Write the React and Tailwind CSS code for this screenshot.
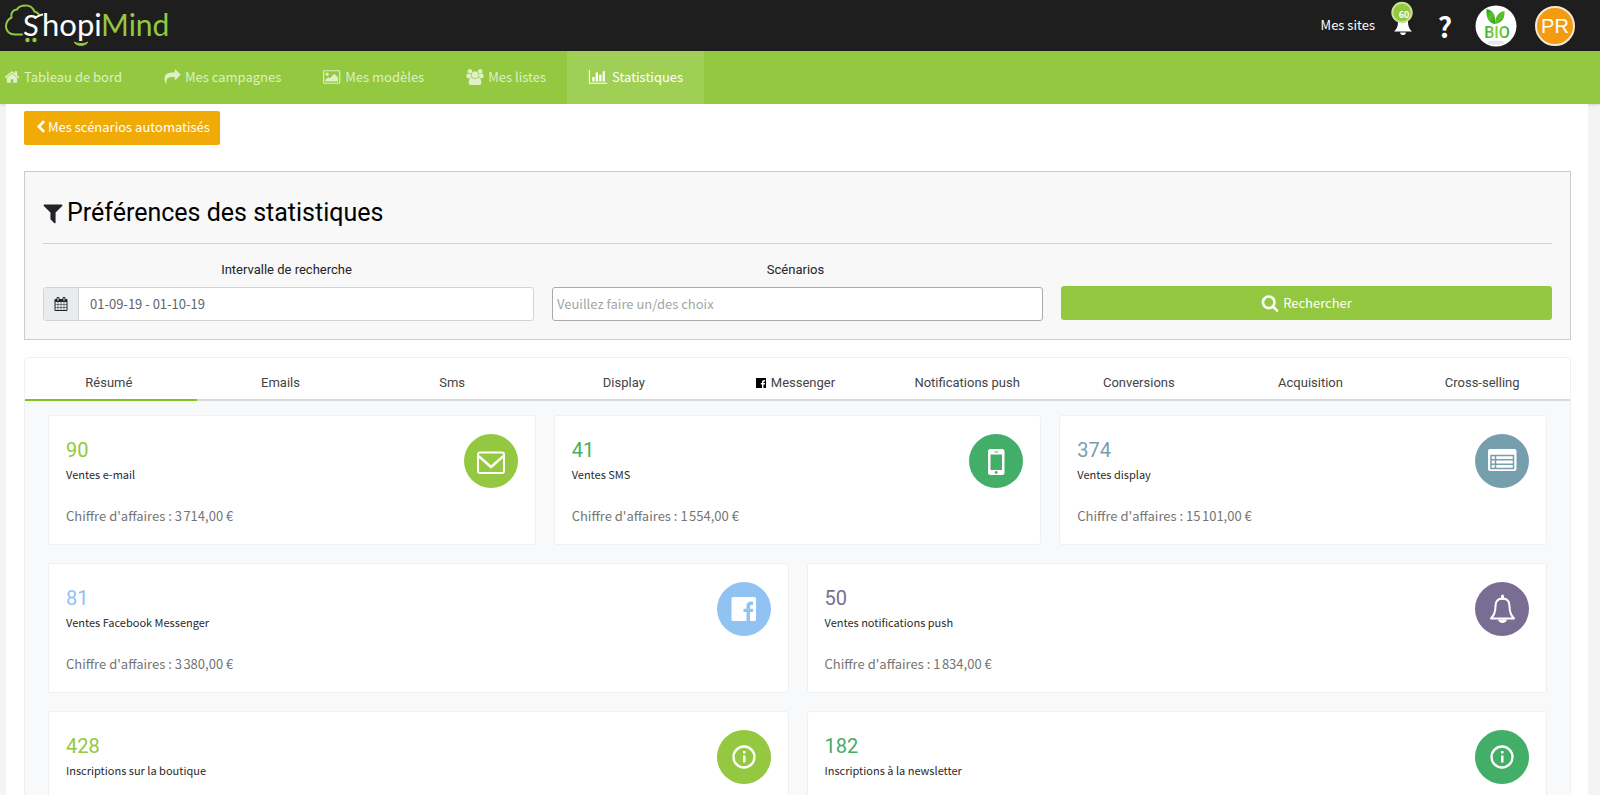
import React from "react";

const body = "font-['Noto_Sans_CJK_JP','Noto_Sans',sans-serif]";
const roboto = "font-[Roboto,'Noto_Sans',sans-serif]";

function Glyph({ d, x = 0, w = 1792, className }) {
  return (
    <svg viewBox={`${x} 0 ${w} 1792`} fill="currentColor" aria-hidden="true" className={className}>
      <path d={d} />
    </svg>
  );
}

const G = {
  home: "M1472 992v480q0 26-19 45t-45 19h-384v-384h-256v384h-384q-26 0-45-19t-19-45v-480q0-1 .5-3t.5-3l575-474 575 474q1 2 1 6zm223-69l-62 74q-8 9-21 11h-3q-13 0-21-7l-692-577-692 577q-12 8-24 7-13-2-21-11l-62-74q-8-10-7-23.5t11-21.5l719-599q32-26 76-26t76 26l244 204v-195q0-14 9-23t23-9h192q14 0 23 9t9 23v408l219 182q10 8 11 21.5t-7 23.5z",
  share: "M1792 640q0 26-19 45l-512 512q-19 19-45 19t-45-19-19-45v-256h-224q-98 0-175.5 6t-154 21.5-133 42.5-105.5 69.5-80 101-48.5 138.5-17.5 181q0 55 5 123 0 6 2.5 23.5t2.5 26.5q0 15-8.5 25t-23.5 10q-16 0-28-17-7-9-13-22t-13.5-30-10.5-24q-127-285-127-451 0-199 53-333 162-403 875-403h224v-256q0-26 19-45t45-19 45 19l512 512q19 19 19 45z",
  image: "M576 576q0 80-56 136t-136 56-136-56-56-136 56-136 136-56 136 56 56 136zm1024 384v448h-1408v-192l320-320 160 160 512-512zm96-704h-1600q-13 0-22.5 9.5t-9.5 22.5v1216q0 13 9.5 22.5t22.5 9.5h1600q13 0 22.5-9.5t9.5-22.5v-1216q0-13-9.5-22.5t-22.5-9.5zm160 32v1216q0 66-47 113t-113 47h-1600q-66 0-113-47t-47-113v-1216q0-66 47-113t113-47h1600q66 0 113 47t47 113z",
  users: "M593 896q-162 5-265 128h-134q-82 0-138-40.5t-56-118.5q0-353 124-353 6 0 43.5 21t97.5 42.5 119 21.5q67 0 133-23-5 37-5 66 0 159 81 293zm1071 637q0 120-73 189.5t-194 69.5h-874q-121 0-194-69.5t-73-189.5q0-53 3.5-103.5t14-109 26.5-108.5 43-97.5 62-81 85.5-53.5 111.5-20q10 0 43 21.5t73 48 107 48 135 21.5 135-21.5 107-48 73-48 43-21.5q61 0 111.5 20t85.5 53.5 62 81 43 97.5 26.5 108.5 14 109 3.5 103.5zm-1024-1277q0 106-75 181t-181 75-181-75-75-181 75-181 181-75 181 75 75 181zm704 384q0 159-112.5 271.5t-271.5 112.5-271.5-112.5-112.5-271.5 112.5-271.5 271.5-112.5 271.5 112.5 112.5 271.5zm576 225q0 78-56 118.5t-138 40.5h-134q-103-123-265-128 81-134 81-293 0-29-5-66 66 23 133 23 59 0 119-21.5t97.5-42.5 43.5-21q124 0 124 353zm-128-609q0 106-75 181t-181 75-181-75-75-181 75-181 181-75 181 75 75 181z",
  chart: "M640 896v512h-256v-512h256zm384-512v1024h-256v-1024h256zm1024 1152v128h-2048v-1536h128v1408h1920zm-640-896v768h-256v-768h256zm384-384v1152h-256v-1152h256z",
  chevron: "M1427 301l-531 531 531 531q19 19 19 45t-19 45l-166 166q-19 19-45 19t-45-19l-742-742q-19-19-19-45t19-45l742-742q19-19 45-19t45 19l166 166q19 19 19 45t-19 45z",
  filter: "M1595 295q17 41-14 70l-493 493v742q0 42-39 59-13 5-25 5-27 0-45-19l-256-256q-19-19-19-45v-486l-493-493q-31-29-14-70 17-39 59-39h1280q42 0 59 39z",
  calendar: "M192 1664h288v-288h-288v288zm352 0h320v-288h-320v288zm-352-352h288v-320h-288v320zm352 0h320v-320h-320v320zm-352-384h288v-288h-288v288zm736 736h320v-288h-320v288zm-384-736h320v-288h-320v288zm768 736h288v-288h-288v288zm-384-352h320v-320h-320v320zm-352-864v-288q0-13-9.5-22.5t-22.5-9.5h-64q-13 0-22.5 9.5t-9.5 22.5v288q0 13 9.5 22.5t22.5 9.5h64q13 0 22.5-9.5t9.5-22.5zm736 864h288v-320h-288v320zm-384-384h320v-288h-320v288zm384 0h288v-288h-288v288zm32-480v-288q0-13-9.5-22.5t-22.5-9.5h-64q-13 0-22.5 9.5t-9.5 22.5v288q0 13 9.5 22.5t22.5 9.5h64q13 0 22.5-9.5t9.5-22.5zm384-64v1280q0 52-38 90t-90 38h-1408q-52 0-90-38t-38-90v-1280q0-52 38-90t90-38h128v-96q0-66 47-113t113-47h64q66 0 113 47t47 113v96h384v-96q0-66 47-113t113-47h64q66 0 113 47t47 113v96h128q52 0 90 38t38 90z",
  search: "M1216 832q0-185-131.5-316.5t-316.5-131.5-316.5 131.5-131.5 316.5 131.5 316.5 316.5 131.5 316.5-131.5 131.5-316.5zm512 832q0 52-38 90t-90 38q-54 0-90-38l-343-342q-179 124-399 124-143 0-273.5-55.5t-225-150-150-225-55.5-273.5 55.5-273.5 150-225 225-150 273.5-55.5 273.5 55.5 225 150 150 225 55.5 273.5q0 220-124 399l343 343q37 37 37 90z",
};

function Logo() {
  return (
    <svg viewBox="0 0 176 51" className="h-[51px] w-[176px]" role="img" aria-label="ShopiMind">
      <path
        d="M22 34.500H15C9.500 34.500 6 31 6 26.500C6 22 8.500 19 11.500 17.500C10.500 13 13 9.500 17 9.500C18.500 6.500 22 5.500 26 5.500C30 5.500 33 8 34.500 11.500C36.500 12 38 13 39 14.500"
        fill="none"
        stroke="#93c840"
        strokeWidth="2"
        strokeLinecap="round"
      />
      <path d="M34 17.500C38 17.500 39.500 14.500 43 14.500" fill="none" stroke="#fff" strokeWidth="2" />
      <circle cx="27.500" cy="40" r="2.200" fill="#93c840" />
      <circle cx="34.500" cy="40" r="2.200" fill="#93c840" />
      <path d="M74 42C76 46.500 86 46.500 88 42C84 44 78 44 74 42Z" fill="#93c840" stroke="#93c840" strokeWidth="1" />
      <text y="36" className="font-[Lato,sans-serif]">
        <tspan x="23" fill="#ffffff" fontSize="29">S</tspan>
        <tspan x="42" fill="#ffffff" fontSize="31">hopi</tspan>
        <tspan x="101" fill="#93c840" fontSize="30">Mind</tspan>
      </text>
    </svg>
  );
}

function AlertBell() {
  return (
    <svg viewBox="0 0 24 36" className="h-9 w-6" aria-hidden="true">
      <path d="M7 14H17V22C17 26 18 29 21 31.500H3C6 29 7 26 7 22Z" fill="#fff" />
      <path d="M9 32.500H15C14.500 34.500 13.500 35 12 35C10.500 35 9.500 34.500 9 32.500Z" fill="#fff" />
      <circle cx="11" cy="12.500" r="9.700" fill="#93c840" stroke="#c6e39a" strokeWidth="2" />
      <text x="13" y="18" textAnchor="middle" fontSize="9" fill="#fff" fontWeight="700" className="font-['Noto_Sans_CJK_JP',sans-serif]">
        60
      </text>
    </svg>
  );
}

function BioAvatar() {
  return (
    <svg viewBox="0 0 42 42" className="size-[42px]" role="img" aria-label="BIO">
      <defs>
        <linearGradient id="leaf" x1="0" y1="0" x2="1" y2="1">
          <stop offset="0" stopColor="#1f9d2c" />
          <stop offset="0.500" stopColor="#5fc52a" />
          <stop offset="1" stopColor="#2e9a1f" />
        </linearGradient>
        <linearGradient id="bio" x1="0" y1="0" x2="1" y2="0">
          <stop offset="0" stopColor="#2fae3a" />
          <stop offset="0.500" stopColor="#8ed23a" />
          <stop offset="1" stopColor="#2fae3a" />
        </linearGradient>
      </defs>
      <circle cx="21" cy="21" r="20.500" fill="#fff" />
      <ellipse cx="21" cy="37.500" rx="9" ry="2" fill="#e3e8ee" />
      <path d="M20 19C13 18 11 12 11.500 4C17 5 21 8 20 19Z" fill="url(#leaf)" />
      <path d="M20 19C20 11 24 7 29.500 6C30 13 27 18 20 19Z" fill="url(#leaf)" />
      <text x="22" y="33" textAnchor="middle" fontSize="16" fontWeight="500" fill="url(#bio)" className="font-[Roboto,sans-serif]">
        BIO
      </text>
    </svg>
  );
}

const navItems = [
  { label: "Tableau de bord", d: G.home, w: 1792, cls: "w-4" },
  { label: "Mes campagnes", d: G.share, w: 1792, cls: "w-[17px]" },
  { label: "Mes modèles", d: G.image, w: 1856, cls: "w-[18px]" },
  { label: "Mes listes", d: G.users, w: 1920, cls: "w-[18px]" },
  { label: "Statistiques", d: G.chart, w: 2048, cls: "w-5", active: true },
];

const tabs = ["Résumé", "Emails", "Sms", "Display", "Messenger", "Notifications push", "Conversions", "Acquisition", "Cross-selling"];

const icons = {
  mail: (
    <svg viewBox="0 0 54 54" className="size-[54px]" fill="none" stroke="#fff" strokeWidth="2" strokeLinejoin="round">
      <rect x="14" y="18.500" width="26" height="20.500" rx="2" />
      <path d="M14.500 22L27 33L39.500 22" strokeWidth="2.400" />
    </svg>
  ),
  phone: (
    <svg viewBox="0 0 54 54" className="size-[54px]">
      <rect x="19" y="15" width="16.500" height="26" rx="2.500" fill="#fff" />
      <rect x="21.500" y="20.500" width="11.500" height="15.500" fill="#43ae68" />
      <path d="M25.500 18H29" stroke="#43ae68" strokeWidth="1" />
      <circle cx="27.200" cy="38.500" r="1.400" fill="#43ae68" />
    </svg>
  ),
  list: (
    <svg viewBox="0 0 54 54" className="size-[54px]">
      <rect x="13" y="15" width="28.500" height="22" rx="2" fill="#fff" />
      <path d="M16 21.500H38.500V34.500H16ZM16 25.800H38.500M16 30.200H38.500M20.500 21.500V34.500" fill="none" stroke="#769fae" strokeWidth="1.500" />
    </svg>
  ),
  facebook: (
    <svg viewBox="0 0 54 54" className="size-[54px]">
      <path
        d="M16 15H37.500Q39 15 39 16.500V37.500Q39 39 37.500 39H33V30H35.800L36.300 26.800H33V24.800C33 23.600 33.600 23 34.800 23H36V19.700C33 19.300 29.500 20 29.500 24V26.800H26.500V30H29.500V39H16Q14.500 39 14.500 37.500V16.500Q14.500 15 16 15Z"
        fill="#fff"
      />
    </svg>
  ),
  bell: (
    <svg viewBox="0 0 54 54" className="size-[54px]" fill="none" stroke="#fff" strokeWidth="2" strokeLinejoin="round">
      <path d="M27.500 16.500C22.500 16.500 20.500 20 20.500 24C20.500 31 19 33.500 16 36.500H39C36 33.500 34.500 31 34.500 24C34.500 20 32.500 16.500 27.500 16.500Z" />
      <path d="M27.500 14V16.500" strokeWidth="3" strokeLinecap="round" />
      <path d="M23 37.500C23.500 42 31.500 42 32 37.500Z" fill="#fff" stroke="none" />
    </svg>
  ),
  info: (
    <svg viewBox="0 0 54 54" className="size-[54px]">
      <circle cx="27" cy="27" r="10.500" fill="none" stroke="#fff" strokeWidth="2.300" />
      <path d="M26 25.500H28.500V32.500H26ZM26 21H28.500V23.500H26Z" fill="#fff" />
    </svg>
  ),
};

const cardsTop = [
  { value: "90", label: "Ventes e-mail", revenue: "3\u202f714,00 €", icon: "mail", text: "text-[#93c840]", bg: "bg-[#93c840]" },
  { value: "41", label: "Ventes SMS", revenue: "1\u202f554,00 €", icon: "phone", text: "text-[#43ae68]", bg: "bg-[#43ae68]" },
  { value: "374", label: "Ventes display", revenue: "15\u202f101,00 €", icon: "list", text: "text-[#769fae]", bg: "bg-[#769fae]" },
];

const cardsBottom = [
  { value: "81", label: "Ventes Facebook Messenger", revenue: "3\u202f380,00 €", icon: "facebook", text: "text-[#90c2f2]", bg: "bg-[#90c2f2]" },
  { value: "50", label: "Ventes notifications push", revenue: "1\u202f834,00 €", icon: "bell", text: "text-[#786e94]", bg: "bg-[#786e94]" },
  { value: "428", label: "Inscriptions sur la boutique", icon: "info", text: "text-[#93c840]", bg: "bg-[#93c840]" },
  { value: "182", label: "Inscriptions à la newsletter", icon: "info", text: "text-[#43ae68]", bg: "bg-[#43ae68]" },
];

function Card({ value, label, revenue, icon, text, bg }) {
  return (
    <article className="flex min-h-[130px] items-start justify-between rounded-[3px] border border-[#f0f0f0] bg-white px-[17px] pt-[18px]">
      <div className="pt-1">
        <p className={`${roboto} ${text} text-xl leading-6`}>{value}</p>
        <p className="pt-0.5 text-[11px] leading-5 text-[#2a2a2a]">{label}</p>
        {revenue && <p className="mt-[22px] text-[13px] leading-5 text-[#757575]">Chiffre d'affaires : {revenue}</p>}
      </div>
      <span className={`${bg} block size-[54px] shrink-0 rounded-full`}>{icons[icon]}</span>
    </article>
  );
}

export default function App() {
  return (
    <div className={`${body} min-h-screen bg-[#f4f4f4] text-[13px] text-[#212529]`}>
      <header className="flex h-[51px] items-center justify-between bg-[#1e1e1e] pr-[25px] text-white">
        <a href="#accueil"><Logo /></a>
        <div className="flex items-center">
          <a href="#sites" className="pb-0.5 leading-5">Mes sites</a>
          <button type="button" aria-label="60 alertes" className="ml-4 flex h-[51px] items-start"><AlertBell /></button>
          <button type="button" aria-label="Aide" className="ml-5 w-5 text-[28px] leading-[48px] font-bold">?</button>
          <button type="button" className="ml-5"><BioAvatar /></button>
          <button type="button" className="ml-[18px] size-10 rounded-full border-2 border-[#f3ead9] bg-[#f39c12] text-xl font-[Liberation_Sans,sans-serif]">PR</button>
        </div>
      </header>

      <nav className="flex h-[53px] bg-[#93c840] shadow-sm">
        {navItems.map((n, i) => (
          <a
            key={n.label}
            href="#menu"
            className={`flex items-center gap-1 pr-[21px] pb-0.5 ${i === 0 ? "pl-1" : "pl-[21px]"} ${n.active ? "bg-[#a0cf55] text-white" : "text-[#dff0c4]"}`}
          >
            <Glyph d={n.d} w={n.w} className={`${n.cls} h-4`} />
            {n.label}
          </a>
        ))}
      </nav>

      <main className="mr-3 ml-1.5 bg-white pt-[7px] pr-[17px] pb-6 pl-[18px]">
        <a href="#scenarios" className="inline-flex h-[34px] items-center gap-0.5 rounded-xs bg-[#f0ab07] px-2.5 pb-0.5 text-white">
          <Glyph d={G.chevron} w={1600} className="h-3.5 w-3" />
          Mes scénarios automatisés
        </a>

        <section className="mt-[26px] border border-[#ccc] bg-[#f8f8f8] px-[18px] pb-[18px]">
          <h2 className={`${roboto} flex h-[72px] items-center gap-1 border-b border-[#d2d2d2] pt-2.5 text-[25px] text-black`}>
            <Glyph d={G.filter} x={170} w={1450} className="h-6 w-5 text-[#212529]" />
            Préférences des statistiques
          </h2>
          <form className="grid grid-cols-3 gap-[18px] pt-4" onSubmit={(e) => e.preventDefault()}>
            <div>
              <label htmlFor="interval" className={`${roboto} block pr-1 text-center leading-5`}>Intervalle de recherche</label>
              <div className="mt-[7px] flex h-[34px] rounded-[3px] border border-[#ced4da] bg-white">
                <span className="grid w-[35px] place-items-center border-r border-[#ced4da] bg-[#e9ecef]">
                  <Glyph d={G.calendar} className="size-3.5" />
                </span>
                <input id="interval" defaultValue="01-09-19 - 01-10-19" className="min-w-0 flex-1 px-[11px] text-[13px] text-[#5f666d] outline-none" />
              </div>
            </div>
            <div>
              <label htmlFor="scenarios" className={`${roboto} block pr-1 text-center leading-5`}>Scénarios</label>
              <input id="scenarios" placeholder="Veuillez faire un/des choix" className="mt-[7px] h-[34px] w-full rounded-[3px] border border-[#aaa] bg-white px-1 pb-0.5 outline-none placeholder:text-[#a5a5a5]" />
            </div>
            <button type="submit" className="mt-[26px] flex h-[34px] items-center justify-center gap-1 rounded-[3px] bg-[#93c840] text-white">
              <Glyph d={G.search} className="size-[18px]" />
              Rechercher
            </button>
          </form>
        </section>

        <section className="mt-[17px] rounded-[3px] border border-[#f0f0f0] bg-[#f8f9fb]">
          <div role="tablist" className="grid grid-cols-9 bg-white">
            {tabs.map((t, i) => (
              <button
                key={t}
                type="button"
                role="tab"
                aria-selected={i === 0}
                className={`${roboto} flex h-[43px] items-center justify-center gap-[5px] border-b-2 pt-2 pr-1 text-[#444] ${i === 0 ? "border-[#86c11b]" : "border-[#d9d9dc]"}`}
              >
                {t === "Messenger" && (
                  <svg viewBox="0 0 10 10" className="size-2.5" aria-hidden="true">
                    <path d="M0 0H10V10H7.500V6.500H8.800L9 5H7.500V4.200C7.500 3.600 7.800 3.400 8.300 3.400H9V2C7 1.700 6 2.500 6 3.900V5H4.800V6.500H6V10H0Z" fill="#000" />
                  </svg>
                )}
                {t}
              </button>
            ))}
          </div>
          <div className="grid gap-[18px] px-[23px] pt-[14px] pb-6">
            <div className="grid grid-cols-3 gap-[18px]">
              {cardsTop.map((c) => <Card key={c.label} {...c} />)}
            </div>
            <div className="grid grid-cols-2 gap-[18px]">
              {cardsBottom.map((c) => <Card key={c.label} {...c} />)}
            </div>
          </div>
        </section>
      </main>
    </div>
  );
}
